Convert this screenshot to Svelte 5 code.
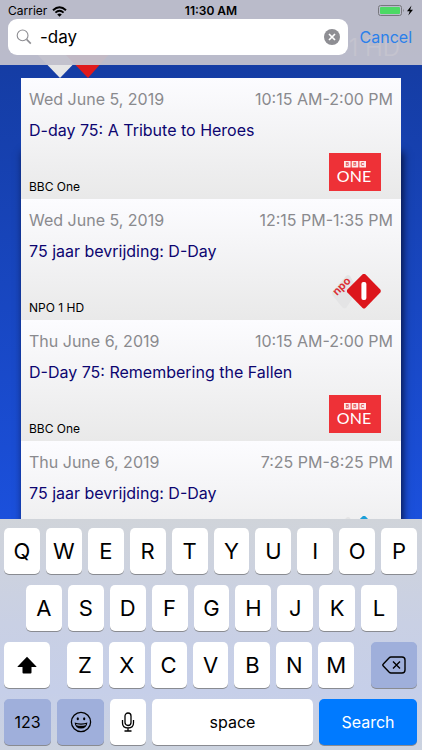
<script lang="ts">
  let query = "-day";

  const results = [
    { date: "Wed June 5, 2019", time: "10:15 AM-2:00 PM", title: "D-day 75: A Tribute to Heroes", channel: "BBC One", logo: "bbc" },
    { date: "Wed June 5, 2019", time: "12:15 PM-1:35 PM", title: "75 jaar bevrijding: D-Day", channel: "NPO 1 HD", logo: "npo1" },
    { date: "Thu June 6, 2019", time: "10:15 AM-2:00 PM", title: "D-Day 75: Remembering the Fallen", channel: "BBC One", logo: "bbc" },
    { date: "Thu June 6, 2019", time: "7:25 PM-8:25 PM", title: "75 jaar bevrijding: D-Day", channel: "", logo: "npo2" },
  ];

  const topKeys = "QWERTYUIOP".split("");
  const middleKeys = "ASDFGHJKL".split("");
  const bottomKeys = "ZXCVBNM".split("");

  const type = (char: string) => (query += char);
</script>

<div class="app">
  <header>
    <div class="status">
      <span class="carrier">
        Carrier
        <svg width="15" height="11" viewBox="0 0 15 11" aria-hidden="true">
          <path d="M1 4.2Q7.5-1.6 14 4.2" fill="none" stroke="#000" stroke-width="2" />
          <path d="M3.4 6.6Q7.5 3 11.6 6.6" fill="none" stroke="#000" stroke-width="1.9" />
          <path d="M7.5 10.8 5.2 8.4Q7.5 6.5 9.8 8.4Z" />
        </svg>
      </span>
      <strong>11:30 AM</strong>
      <span class="power">
        <svg width="36" height="12" viewBox="0 0 36 12" aria-hidden="true">
          <rect x=".5" y=".5" width="23" height="10" rx="2" fill="none" stroke="#77777d" />
          <rect x="2" y="2" width="20" height="7" rx="1" fill="#4cd964" />
          <path d="M25 3.8q1.6 1.7 0 3.4z" fill="#77777d" />
          <path d="M33.5.5 29 6.3h2.7l-1.4 4.2L35 4.7h-2.8z" />
        </svg>
      </span>
    </div>
    <div class="search">
      <label class="field">
        <svg width="16" height="16" viewBox="0 0 16 16" fill="none" stroke="#8e8e93" aria-hidden="true">
          <circle cx="6.6" cy="6.4" r="5.4" stroke-width="1.1" />
          <path d="m10.6 10.4 4.2 4.2" stroke-width="1.6" />
        </svg>
        <input type="text" aria-label="Search" bind:value={query} />
        <button class="clear" aria-label="Clear" on:click={() => (query = "")}>
          <svg width="16" height="16" viewBox="0 0 16 16">
            <circle cx="8" cy="8" r="8" fill="#8e8e93" />
            <path d="m5 5 6 6m0-6-6 6" stroke="#fff" stroke-width="1.7" />
          </svg>
        </button>
      </label>
      <button class="cancel">Cancel</button>
    </div>
  </header>

  <main>
    <div class="channel-bar">
      <svg width="76" height="50" viewBox="0 0 76 50" aria-hidden="true">
        <path d="M25 50 0 24 25 0 50 24z" fill="#e6e6e6" />
        <path d="M53 50 28 24 53 0 76 24z" fill="#e01a1c" />
      </svg>
      <span>1 HD</span>
    </div>
    <ul>
      {#each results as item}
        <li>
          <div class="when">
            <span>{item.date}</span>
            <span>{item.time}</span>
          </div>
          <h2>{item.title}</h2>
          <div class="where">
            <span>{item.channel}</span>
            {#if item.logo === "bbc"}
              <svg width="52" height="38" viewBox="0 0 52 38">
                <path d="M0 0h52v38H0z" fill="#ee3137" />
                <path d="M15 8h6.6v6.6H15zM22.7 8h6.6v6.6h-6.6zM30.4 8H37v6.6h-6.6z" fill="#ffeaea" />
                <g class="bbc" fill="#e04448">
                  <text x="18.3" y="13.4">B</text>
                  <text x="26" y="13.4">B</text>
                  <text x="33.7" y="13.4">C</text>
                </g>
                <text class="one" x="25" y="29" fill="#fff">ONE</text>
              </svg>
            {:else}
              <svg width="52" height="38" viewBox="0 0 52 38">
                <path d="M4 17 17 2q2-2 4 0l8 14-12 18q-2 1-4-1L4 22q-2-2 0-5z" fill="#e4e4e5" />
                <path
                  d="M33.6.3q1.4-1.2 2.8 0L51.3 15.6q1 1.4 0 2.8L36.4 34q-1.4 1.2-2.8 0L18.4 18.4q-1-1.4 0-2.8z"
                  fill={item.logo === "npo1" ? "#dc151b" : "#1b9fd8"}
                />
                {#if item.logo === "npo1"}
                  <rect x="32.4" y="8" width="5" height="18" rx="2" fill="#fff" />
                  <text class="npo" transform="translate(8 22) rotate(-45)" fill="#dc3035">npo</text>
                {/if}
              </svg>
            {/if}
          </div>
        </li>
      {/each}
    </ul>
  </main>

  <div class="keyboard">
    <div class="row">
      {#each topKeys as key}
        <button on:click={() => type(key)}>{key}</button>
      {/each}
    </div>
    <div class="row row--inset">
      {#each middleKeys as key}
        <button on:click={() => type(key)}>{key}</button>
      {/each}
    </div>
    <div class="row row--shift">
      <button aria-label="Shift">
        <svg width="20" height="18" viewBox="0 0 20 18">
          <path d="M10 .8 19.4 10.4q.4.6-.4.6h-4.5v5.5q0 1-1 1h-7q-1 0-1-1V11H1q-.8 0-.4-.6z" />
        </svg>
      </button>
      <div class="row">
        {#each bottomKeys as key}
          <button on:click={() => type(key)}>{key}</button>
        {/each}
      </div>
      <button class="dark" aria-label="Delete" on:click={() => (query = query.slice(0, -1))}>
        <svg width="24" height="18" viewBox="0 0 24 18" fill="none" stroke="#000" stroke-width="1.4">
          <path d="M9 1h11q3 0 3 3v10q0 3-3 3H9q-1 0-2-1L1.3 10q-1-1 0-2L7 2q1-1 2-1z" />
          <path d="m11 5.5 7 7m0-7-7 7" />
        </svg>
      </button>
    </div>
    <div class="row row--space">
      <button class="dark small">123</button>
      <button class="dark" aria-label="Emoji">
        <svg width="22" height="22" viewBox="0 0 22 22">
          <circle cx="11" cy="11" r="9.6" fill="none" stroke="#000" stroke-width="1.3" />
          <ellipse cx="7.8" cy="7.8" rx="1.1" ry="1.5" />
          <ellipse cx="14.2" cy="7.8" rx="1.1" ry="1.5" />
          <path d="M4.6 11.5q6.4 1.8 12.8 0-.6 6-6.4 6t-6.4-6z" />
          <path d="M6 13q5 1.3 10 0l-.5 1.2q-4.5 1.1-9 0z" fill="#a6b4dc" />
        </svg>
      </button>
      <button aria-label="Dictate">
        <svg width="14" height="20" viewBox="0 0 14 20" fill="none" stroke="#000" stroke-width="1.3">
          <rect x="4" y="1" width="6" height="12.5" rx="3" />
          <path d="M1.5 8v3q0 5 5.5 5t5.5-5V8M7 16v3M3.5 19h7" />
        </svg>
      </button>
      <button class="small" on:click={() => type(" ")}>space</button>
      <button class="go small">Search</button>
    </div>
  </div>
</div>

<style>
  :global(body) {
    margin: 0;
  }
  .app {
    display: grid;
    grid-template-rows: auto minmax(0, 1fr) auto;
    height: 100vh;
    overflow: hidden;
    font-family: Inter, "Liberation Sans", sans-serif;
    font-size: 16px;
  }
  button {
    border: 0;
    padding: 0;
    background: none;
    font: inherit;
    color: #000;
    cursor: pointer;
  }
  svg {
    flex: none;
  }

  /* header */
  header {
    grid-area: 1 / 1;
    z-index: 1;
    padding: 3px 8px 10px;
    background: rgba(194, 193, 204, 0.96);
  }
  .status {
    display: grid;
    grid-template-columns: 1fr auto 1fr;
    align-items: center;
    font-size: 12px;
    line-height: 16px;
  }
  .status strong {
    font-weight: 600;
  }
  .carrier,
  .power {
    display: flex;
    align-items: center;
    gap: 5px;
  }
  .power {
    justify-content: flex-end;
  }
  .search {
    display: flex;
    align-items: center;
    gap: 12px;
    padding-right: 2px;
  }
  .field {
    flex: 1;
    display: flex;
    align-items: center;
    gap: 8px;
    min-width: 0;
    height: 36px;
    padding: 0 8px;
    box-sizing: border-box;
    border-radius: 9px;
    background: #fff;
  }
  .field input {
    flex: 1;
    min-width: 0;
    border: 0;
    padding: 0;
    outline: 0;
    background: none;
    font: inherit;
    font-size: 17px;
  }
  .clear {
    display: flex;
  }
  .cancel {
    font-size: 16px;
    color: #2a80ea;
  }

  /* results */
  main {
    grid-area: 1 / 1 / 3 / 2;
    overflow: hidden;
    background: linear-gradient(#143a9c, #1b50dc);
  }
  .channel-bar {
    display: flex;
    align-items: flex-end;
    justify-content: space-between;
    height: 78px;
    padding: 0 22px 0 35px;
    color: #fff;
    font-size: 24px;
    font-weight: 300;
  }
  .channel-bar span {
    padding-bottom: 16px;
  }
  ul {
    list-style: none;
    margin: 0 21px;
    padding: 0;
    box-shadow: 2px 74px 8px rgba(0, 0, 20, 0.75);
  }
  li {
    display: flex;
    flex-direction: column;
    min-height: 121px;
    padding: 9px 8px 4px;
    box-sizing: border-box;
    background: linear-gradient(#fcfcff, #e9e9e9);
  }
  .when {
    display: flex;
    justify-content: space-between;
    line-height: 24px;
    color: #8a8a8e;
  }
  h2 {
    margin: 7px 0 0;
    font-size: 16px;
    font-weight: 400;
    line-height: 24px;
    color: #0c0570;
  }
  .where {
    flex: 1;
    display: flex;
    align-items: flex-end;
    justify-content: space-between;
    font-size: 12px;
    line-height: 16px;
  }
  .where svg {
    margin: 0 12px 4px 0;
  }
  .bbc {
    font-size: 5px;
    font-weight: 700;
    text-anchor: middle;
  }
  .one {
    font-family: Lato, sans-serif;
    font-size: 16px;
    text-anchor: middle;
  }
  .npo {
    font-size: 11px;
    font-weight: 700;
  }

  /* keyboard */
  .keyboard {
    grid-area: 3 / 1;
    z-index: 1;
    display: grid;
    gap: 11px;
    padding: 9px 5px 5px 4px;
    background: linear-gradient(#d0d4da, #c9d0e4 45%, #c6cfe9 75%, #ccd3df);
  }
  .row {
    display: grid;
    grid-auto-flow: column;
    grid-auto-columns: minmax(0, 1fr);
    gap: 6px;
  }
  .row--inset {
    padding: 0 20px 0 22px;
  }
  .row--shift {
    grid-template-columns: 46px 1fr 46px;
    gap: 17px;
  }
  .row--space {
    grid-template-columns: 47px 47px 36px 1fr 98px;
  }
  .keyboard button {
    display: flex;
    align-items: center;
    justify-content: center;
    height: 46px;
    border-radius: 5px;
    background: #fff;
    box-shadow: 0 1px 0 #898b91;
    font-size: 22px;
  }
  .keyboard .small {
    font-size: 16px;
  }
  .keyboard .dark {
    background: #9fafdb;
  }
  .keyboard .go {
    background: #007aff;
    color: #fff;
  }
</style>
